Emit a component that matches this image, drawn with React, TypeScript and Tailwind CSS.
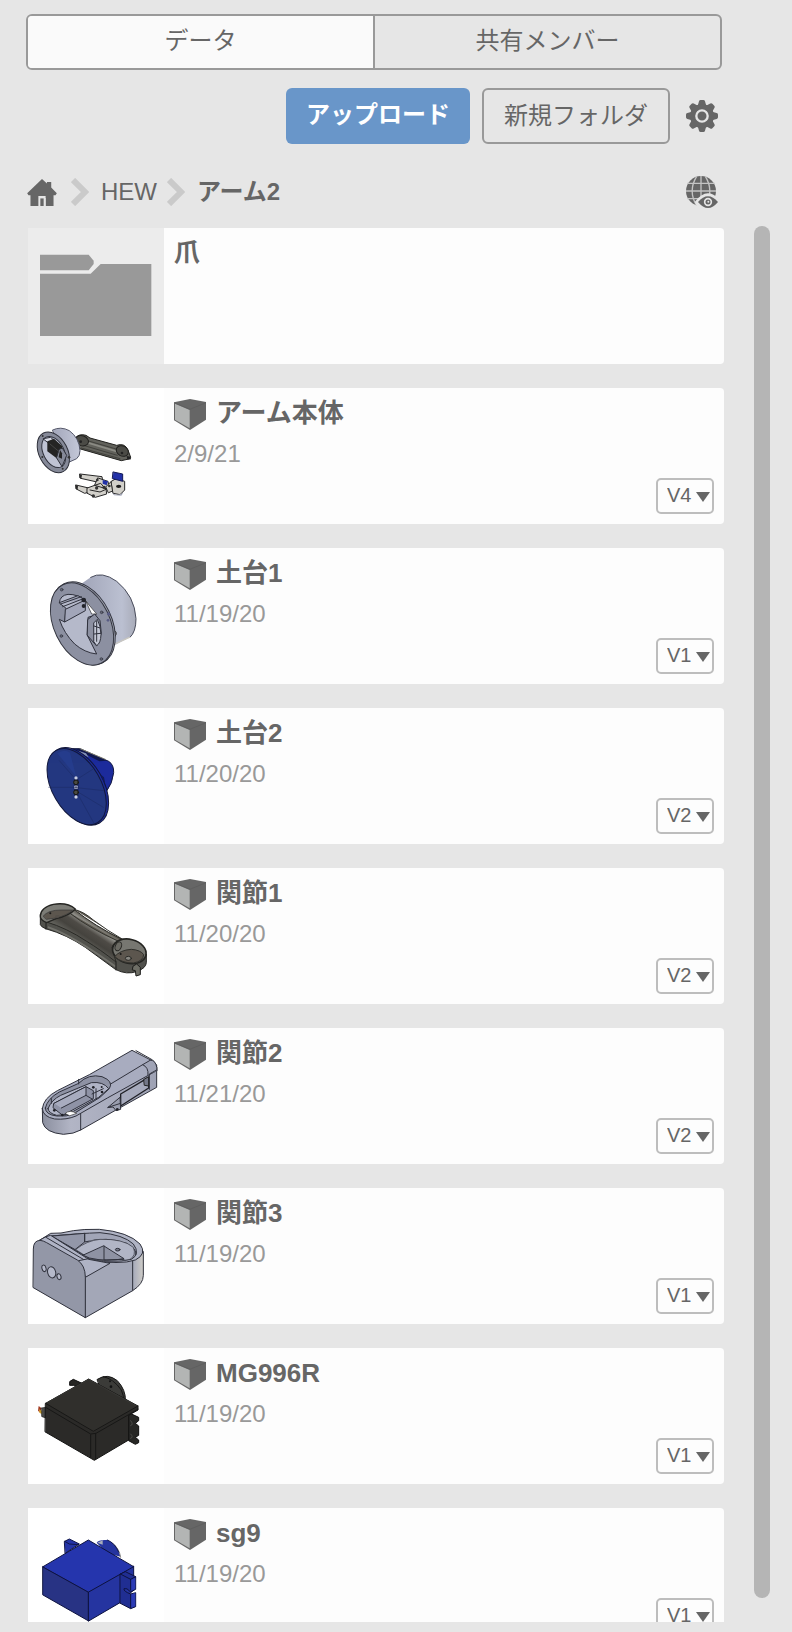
import type { ReactNode } from "react";

const FONT = "font-['Liberation_Sans','Noto_Sans_CJK_JP',sans-serif]";

function HomeIcon() {
  return (
    <svg viewBox="81 534 90 82" className="h-[27px] w-[30px]" fill="#666" aria-hidden="true">
      <path d="M126 534 L141 548 V543 H154 V560 L171 577 L167 583 H161 V616 H137 V592 H120 V616 H91 V583 H85 L81 577 Z" />
      <path d="M115 616 V586 H137 V616 H131 V593 H121 V616 Z" fill="#e6e6e6" />
      <path d="M121 593 H131 V616 H121 Z" />
    </svg>
  );
}

function Chevron() {
  return (
    <svg viewBox="0 0 18 28" className="h-7 w-[18px]" fill="none" stroke="#cacaca" strokeWidth="6" aria-hidden="true">
      <path d="M2 2 L14 14 L2 26" />
    </svg>
  );
}

function GearIcon() {
  return (
    <svg viewBox="-48 -48 96 96" className="size-8" fill="#666" aria-hidden="true">
      {[0, 45, 90, 135, 180, 225, 270, 315].map((a) => (
        <path key={a} transform={`rotate(${a})`} d="M-13 -30 L-9 -44 Q-8 -48 -4 -48 H4 Q8 -48 9 -44 L13 -30 Z" />
      ))}
      <circle r="36" />
      <circle r="17" fill="none" stroke="#e6e6e6" strokeWidth="7" />
    </svg>
  );
}

function GlobeEyeIcon() {
  return (
    <svg viewBox="882 528 96 96" className="size-8" aria-hidden="true">
      <circle cx="927" cy="573" r="45" fill="#666" />
      <g fill="none" stroke="#c4c4c4" strokeWidth="4">
        <path d="M927 528 V618 M886 550 H968 M882 573 H972 M886 596 H968" />
        <path d="M914 529 Q887 573 914 617 M940 529 Q967 573 940 617" />
      </g>
      <path d="M908 606 Q948 554 988 606 V630 H920 Z" fill="#e6e6e6" />
      <path d="M918 606 Q948 572 978 606 Q948 642 918 606 Z" fill="#666" />
      <circle cx="948" cy="606" r="10" fill="#666" stroke="#e6e6e6" strokeWidth="5" />
      <circle cx="949" cy="605" r="3" fill="#e6e6e6" />
    </svg>
  );
}

function CubeIcon() {
  return (
    <svg viewBox="0 0 96 93" className="h-[31px] w-8 shrink-0" aria-hidden="true">
      <path d="M0 10 L48 0 L96 9 V62 L48 93 L0 64 Z" fill="#666" />
      <path d="M3 14 L47 33 V88 L3 62 Z" fill="#b3b5b4" />
      <path d="M0 11 L48 31 L96 11" fill="none" stroke="#5a5a5a" strokeWidth="2" />
    </svg>
  );
}

function Drawing({ viewBox, children }: { viewBox: string; children: ReactNode }) {
  return (
    <svg viewBox={viewBox} className="size-[136px]" strokeLinejoin="round" strokeLinecap="round" aria-hidden="true">
      {children}
    </svg>
  );
}

const folderArt = (
  <Drawing viewBox="84 24 408 408">
    <path d="M120 104 H266 L281 122 V132 L266 151 H120 Z" fill="#999" />
    <path d="M120 161 H272 L302 132 H454 V348 H120 Z" fill="#999" />
  </Drawing>
);

const armArt = (
  <Drawing viewBox="84 504 408 408">
    <defs>
      <linearGradient id="armBarrel" x1="0" x2="1">
        <stop offset="0" stopColor="#a2a6ba" />
        <stop offset="1" stopColor="#c4c8d8" />
      </linearGradient>
    </defs>
    <path d="M228 652 Q238 640 258 646 L270 654 L350 676 Q374 668 384 690 L392 712 L382 718 L364 722 L238 686 Z" fill="#62625c" stroke="#22221f" strokeWidth="3" />
    <path d="M262 662 L352 688 M250 676 L352 706 M244 684 L360 716" stroke="#30302c" strokeWidth="2" fill="none" />
    <path d="M262 668 L350 694" stroke="#8b8b84" strokeWidth="5" />
    <ellipse cx="246" cy="662" rx="20" ry="15" transform="rotate(20 246 662)" fill="#4b4b46" stroke="#20201e" strokeWidth="3" />
    <ellipse cx="367" cy="693" rx="19" ry="15" transform="rotate(30 367 693)" fill="#4b4b46" stroke="#20201e" strokeWidth="3" />
    <circle cx="242" cy="665" r="4" fill="#222" />
    <circle cx="366" cy="699" r="4" fill="#222" />
    <path d="M380 708 L392 710 L393 718 L382 720 Z" fill="#222" />
    <path d="M158 630 Q182 618 208 632 Q238 654 240 692 Q240 708 230 716 L208 726 Z" fill="url(#armBarrel)" stroke="#55586a" strokeWidth="3" />
    <ellipse cx="160" cy="697" rx="43" ry="65" transform="rotate(-27 160 697)" fill="#858998" stroke="#2e303a" strokeWidth="3" />
    <ellipse cx="161" cy="696" rx="31" ry="50" transform="rotate(-27 161 696)" fill="#bfc3d4" stroke="#30323d" strokeWidth="3" />
    <path d="M130 656 L152 652 L176 674 L166 684 Z" fill="#d9dce6" stroke="#30323d" strokeWidth="3" />
    <path d="M142 664 L162 656 L186 678 L188 714 L172 716 L142 694 Z" fill="#242424" />
    <path d="M178 688 L187 684 L200 706 L186 740 L170 714 Z" fill="#858998" stroke="#2e303a" strokeWidth="3" />
    <path d="M180 690 L186 700 V716 L176 712 Z" fill="#242424" />
    <path d="M150 672 L176 694" stroke="#555" strokeWidth="2" />
    <g fill="#333"><circle cx="128" cy="648" r="3" /><circle cx="127" cy="711" r="3" /><circle cx="188" cy="746" r="3" /><circle cx="207" cy="712" r="4" /></g>
    <g fill="#d2d0ca" stroke="#272727" strokeWidth="3">
      <path d="M240 762 L306 770 L308 782 L300 788 L242 775 Z" />
      <path d="M228 795 L266 804 L268 816 L254 820 L229 807 Z" />
      <path d="M294 774 L324 784 L328 804 L300 812 L284 798 Z" />
      <path d="M262 804 L284 796 L318 806 L320 822 L286 832 L262 820 Z" />
      <path d="M318 800 L334 784 L340 812 L326 818 Z" />
      <path d="M334 784 L348 776 L374 784 V810 L360 824 L340 820 Z" />
      <path d="M284 796 L302 790 L316 806 M270 810 L300 816 L318 808" fill="none" />
    </g>
    <path d="M238 762 L246 765 L244 776 L238 773 Z M227 795 L234 797 L233 809 L227 806 Z" fill="#2a2a2a" />
    <path d="M340 756 L368 762 L368 784 L338 776 Z" fill="#2231a8" stroke="#151b55" strokeWidth="3" />
    <path d="M308 780 L324 784 L320 796 L308 791 Z" fill="#2231a8" />
    <path d="M336 819 Q352 830 370 818 L364 827 L342 826 Z" fill="#a5a9ba" />
    <ellipse cx="356" cy="799" rx="8" ry="5" fill="#1e1e1e" />
    <g fill="#333"><circle cx="290" cy="804" r="5" /><circle cx="312" cy="802" r="5" /><circle cx="280" cy="828" r="5" /><circle cx="292" cy="780" r="4" /><circle cx="328" cy="798" r="4" /></g>
  </Drawing>
);

const base1Art = (
  <Drawing viewBox="24 24 408 408">
    <defs>
      <linearGradient id="b1Barrel" x1="0" x2="1">
        <stop offset="0" stopColor="#a0a4b8" />
        <stop offset=".75" stopColor="#bbc0d1" />
        <stop offset="1" stopColor="#a8abb8" />
      </linearGradient>
    </defs>
    <path d="M180 134 L212 112 Q246 92 290 124 Q344 168 348 236 Q348 276 330 292 L284 316 Z" fill="url(#b1Barrel)" />
    <path d="M212 112 Q246 92 290 124 Q344 168 348 236 Q348 276 330 292" fill="none" stroke="#4a4d5c" strokeWidth="3" />
    <path d="M284 312 L328 292" stroke="#c9c7c0" strokeWidth="4" />
    <path d="M276 270 Q292 272 288 284 L280 296" fill="#8f93a3" stroke="#333" strokeWidth="3" />
    <ellipse cx="190" cy="250" rx="85" ry="132" transform="rotate(-26 190 250)" fill="#a3a7b6" stroke="#33353f" strokeWidth="3" />
    <ellipse cx="186" cy="252" rx="84" ry="131" transform="rotate(-26 186 252)" fill="#8c90a1" stroke="#33353f" strokeWidth="3" />
    <path d="M118 188 Q120 166 144 163 Q174 162 198 184 L228 224 L204 232 L202 286 L230 342 Q194 338 164 312 Q132 280 118 238 L134 246 L138 206 Z" fill="#b5b9ca" stroke="#30323d" strokeWidth="3" />
    <path d="M118 188 L174 167 L196 180 L136 208 L134 246 L196 212 V180 M122 192 L184 170 M128 200 L190 176" fill="#a2a6b9" stroke="#30323d" strokeWidth="3" />
    <path d="M198 184 L230 222 L216 222 Z" fill="#fff" stroke="#333" strokeWidth="2" />
    <path d="M204 238 L224 222 L240 242 L244 280 L230 318 L202 286 Z" fill="#8c90a1" stroke="#30323d" strokeWidth="3" />
    <path d="M222 248 L232 238 Q242 256 243 284 Q242 310 230 317 L222 306 Z" fill="#c4c8d6" stroke="#30323d" strokeWidth="3" />
    <path d="M230 244 V304 M222 258 L240 264 M223 282 L242 280" fill="none" stroke="#30323d" strokeWidth="3" />
    <g fill="#23242b"><circle cx="191" cy="180" r="7" /><circle cx="191" cy="198" r="6" /></g>
    <g fill="#666a7a" stroke="#30323d" strokeWidth="2"><circle cx="125" cy="149" r="4" /><circle cx="245" cy="217" r="4" /><circle cx="124" cy="288" r="4" /><circle cx="244" cy="357" r="4" /></g>
    <g fill="#5a5d85"><circle cx="266" cy="222" r="5" /><circle cx="264" cy="241" r="4" /></g>
  </Drawing>
);

const base2Art = (
  <Drawing viewBox="24 24 408 408">
    <path d="M158 146 L180 146 L266 184 Q282 194 281 218 Q278 250 258 276 L236 272 Z" fill="#1c2b9c" stroke="#14193f" strokeWidth="3" />
    <path d="M166 147 L182 147 L262 182 L238 184 Z" fill="#10184e" />
    <path d="M174 152 L198 160 L206 172 L188 164 Z" fill="#7f8db5" />
    <path d="M180 146 L256 178" stroke="#7c7c70" strokeWidth="3" />
    <ellipse cx="175" cy="259" rx="75" ry="127" transform="rotate(-30 175 259)" fill="#1c2c98" stroke="#111638" strokeWidth="3" />
    <ellipse cx="170" cy="260" rx="73" ry="125" transform="rotate(-30 170 260)" fill="#233780" stroke="#12183c" strokeWidth="3" />
    <path d="M112 160 Q132 146 150 158 L168 228 Z" fill="#28439b" opacity=".45" />
    <path d="M166 262 L86 262 M172 280 L222 370 M174 276 L250 322 M174 236 L218 208 M178 264 L252 272 M160 230 L118 182" stroke="#1a2860" strokeWidth="3" opacity=".45" />
    <path d="M168 228 L176 240 L175 286 L168 298 L162 288 L161 240 Z" fill="#17215a" />
    <g fill="#c8cee4"><circle cx="168" cy="234" r="5" /><circle cx="168" cy="262" r="6" /><circle cx="168" cy="291" r="5" /></g>
    <g fill="#4b4b42" stroke="#171713" strokeWidth="3"><circle cx="168" cy="247" r="7" /><circle cx="168" cy="277" r="7" /></g>
    <path d="M163 262 H174 M168 256 V269" stroke="#18204a" strokeWidth="2" />
    <path d="M240 222 L252 232 L256 254 Z" fill="#111a58" />
  </Drawing>
);

const joint1Art = (
  <Drawing viewBox="24 24 408 408">
    <defs>
      <linearGradient id="j1Top" gradientUnits="userSpaceOnUse" x1="170" y1="245" x2="222" y2="165">
        <stop offset="0" stopColor="#6c6c66" />
        <stop offset=".3" stopColor="#45433e" />
        <stop offset=".5" stopColor="#4e4b46" />
        <stop offset=".68" stopColor="#8f8e88" />
        <stop offset=".8" stopColor="#5b574f" />
        <stop offset="1" stopColor="#6a645a" />
      </linearGradient>
    </defs>
    <path d="M61 164 L61 194 Q64 202 80 207 Q140 224 196 262 L286 328 Q320 346 352 334 Q378 324 379 308 V282 L280 240 Z" fill="#51514c" stroke="#262623" strokeWidth="3" />
    <path d="M86 202 Q160 228 284 318" fill="none" stroke="#71716b" strokeWidth="6" />
    <path d="M80 186 Q140 204 200 244 Q240 268 288 306 L276 262 Q284 242 306 238 Q224 198 162 148 L108 176 Z" fill="url(#j1Top)" stroke="#2a2a26" strokeWidth="3" />
    <path d="M162 148 Q190 154 220 180 Q262 212 308 238 M150 160 Q210 206 296 244" fill="#5d584f" stroke="#34342f" strokeWidth="3" />
    <path d="M78 188 V208 M288 306 V330" stroke="#1e1e1c" strokeWidth="3" />
    <path d="M61 168 Q62 142 100 133 Q142 126 166 147 Q150 166 108 176 L80 188 Q60 180 61 168 Z" fill="#7c7c76" stroke="#252522" strokeWidth="4" />
    <path d="M70 168 Q84 150 124 150 Q146 150 158 150 Q142 166 108 174 L80 178 Z" fill="#5c564e" stroke="#333" strokeWidth="2" />
    <ellipse cx="328" cy="274" rx="51" ry="36" transform="rotate(14 328 274)" fill="#777771" stroke="#252522" strokeWidth="5" />
    <path d="M284 290 Q300 270 334 268 Q362 270 371 284 Q370 304 340 309 Q306 310 284 290 Z" fill="#5c564e" stroke="#30302c" strokeWidth="3" />
    <ellipse cx="295" cy="259" rx="9" ry="14" transform="rotate(25 295 259)" fill="#6b6a63" stroke="#292926" strokeWidth="3" />
    <ellipse cx="325" cy="295" rx="9" ry="6" fill="#898882" stroke="#292926" strokeWidth="3" />
    <circle cx="302" cy="282" r="3" fill="#181818" />
    <circle cx="91" cy="160" r="3" fill="#181818" />
    <ellipse cx="112" cy="169" rx="7" ry="4" fill="#55504a" />
    <path d="M340 318 L350 312 L361 322 V344 L348 348 L346 332 L338 330 Z" fill="#6e6e66" stroke="#1e1e1c" strokeWidth="3" />
  </Drawing>
);

const joint2Art = (
  <Drawing viewBox="24 24 408 408">
    <defs>
      <linearGradient id="j2Side" x1="0" x2="1">
        <stop offset="0" stopColor="#8b8f9f" />
        <stop offset=".25" stopColor="#b2b5c5" />
        <stop offset="1" stopColor="#9ea2b4" />
      </linearGradient>
    </defs>
    <path d="M67 266 L68 308 Q76 338 130 343 Q162 342 182 330 L288 270 L410 202 V136 Z" fill="url(#j2Side)" stroke="#30323d" strokeWidth="3" />
    <path d="M67 266 Q70 234 112 212 L208 164 L336 91 L400 124 Q412 132 410 152 L262 234 L168 288 Q140 300 104 297 Q68 290 67 266 Z" fill="#a8acbf" stroke="#30323d" strokeWidth="3" />
    <path d="M384 124 L400 124 Q412 132 411 152 L384 164 Q386 142 368 138 Z" fill="#a0a4b6" />
    <path d="M348 92 L398 120 Q412 132 411 152 M384 164 Q386 142 368 134 L262 198 M368 134 L392 120" fill="none" stroke="#30323d" strokeWidth="3" />
    <path d="M76 264 Q82 236 118 216 L176 190 Q206 160 246 170 Q282 184 268 206 L240 232 L166 278 Q140 292 110 288 Q76 284 76 264 Z" fill="#8e92a4" stroke="#30323d" strokeWidth="3" />
    <path d="M84 266 Q94 240 122 226 L214 188 Q250 184 266 206 L236 232 L160 274 Q136 288 110 286 Q86 280 84 266 Z" fill="#b0b4c6" stroke="#30323d" strokeWidth="3" />
    <path d="M102 250 L198 200 L220 212 V236 L128 286 L100 264 Z" fill="#8f93a6" stroke="#30323d" strokeWidth="3" />
    <path d="M102 250 L198 200 V226 L124 264 M198 226 L218 238" fill="#a8acbf" stroke="#30323d" strokeWidth="3" />
    <path d="M228 206 V236 M216 222 L250 206 M94 250 V236 M176 178 V192" stroke="#30323d" strokeWidth="3" />
    <path d="M136 280 Q148 268 170 280 L150 287 Z" fill="#fff" stroke="#333" strokeWidth="2" />
    <path d="M302 222 L386 172 V204 L302 258 Z" fill="#a6aabc" stroke="#202127" strokeWidth="4" />
    <path d="M372 178 L386 170 V198 L374 196 Z" fill="#737787" stroke="#222" strokeWidth="3" />
    <path d="M264 262 L300 232 L302 268 L288 272 L280 262 Z" fill="#9a9eaf" stroke="#30323d" strokeWidth="3" />
    <path d="M264 262 L302 250 M182 282 V330 M410 150 L388 162 V208" stroke="#30323d" strokeWidth="3" fill="none" />
    <g fill="#202127"><circle cx="103" cy="271" r="4" /><circle cx="127" cy="285" r="4" /><circle cx="220" cy="202" r="4" /><circle cx="246" cy="216" r="4" /><circle cx="245" cy="201" r="3" /><circle cx="292" cy="268" r="4" /></g>
  </Drawing>
);

const joint3Art = (
  <Drawing viewBox="24 24 408 408">
    <defs>
      <linearGradient id="j3End" x1="0" x2="1">
        <stop offset="0" stopColor="#a5a9ba" />
        <stop offset="1" stopColor="#cfcdc8" />
      </linearGradient>
    </defs>
    <path d="M338 240 L370 214 V286 Q370 312 338 332 Z" fill="url(#j3End)" stroke="#30323d" strokeWidth="3" />
    <path d="M196 292 L250 250 L338 238 V332 L196 413 Z" fill="#a3a7b7" stroke="#30323d" strokeWidth="3" />
    <path d="M60 180 L92 160 Q120 162 160 152 Q190 147 238 148 Q326 156 360 192 Q382 222 346 240 Q300 256 206 238 L176 240 Z" fill="#afb3c4" stroke="#30323d" strokeWidth="3" />
    <path d="M94 168 Q180 160 240 158 Q310 164 340 192 Q362 222 334 238 Q280 250 210 236 Z" fill="#a1a5b7" stroke="#30323d" strokeWidth="3" />
    <path d="M96 168 Q150 164 194 160 V186 L166 208 Z" fill="#9397a9" stroke="#30323d" strokeWidth="3" />
    <path d="M194 160 V186 Q260 168 320 190 Q350 206 348 224" fill="none" stroke="#30323d" strokeWidth="3" />
    <path d="M168 208 Q200 182 240 178 Q310 176 340 202 Q350 226 330 238 Q280 250 210 236 Z" fill="#b1b5c6" stroke="#30323d" strokeWidth="2" />
    <path d="M252 198 L312 236 Q260 246 208 234 L190 226 Z" fill="#8e92a3" stroke="#30323d" strokeWidth="3" />
    <path d="M252 198 V240 L312 238" fill="none" stroke="#30323d" strokeWidth="3" />
    <path d="M60 180 L78 170 L92 166 L206 238 L270 250 L196 292 Q188 256 166 242 Z" fill="#afb3c5" stroke="#30323d" strokeWidth="3" />
    <path d="M78 172 L190 238 M206 236 L176 242" fill="none" stroke="#30323d" strokeWidth="3" />
    <path d="M40 206 Q40 182 60 181 Q70 182 80 188 L172 240 Q196 256 196 292 V413 L40 323 Z" fill="#9397a7" stroke="#30323d" strokeWidth="3" />
    <ellipse cx="293" cy="209" rx="7" ry="4" fill="#747888" stroke="#30323d" strokeWidth="3" />
    <g fill="#b5b9ca" stroke="#30323d" strokeWidth="3">
      <ellipse cx="95" cy="277" rx="12" ry="17" transform="rotate(-15 95 277)" />
      <ellipse cx="72" cy="265" rx="6" ry="10" transform="rotate(-15 72 265)" />
      <ellipse cx="117" cy="290" rx="6" ry="9" transform="rotate(-15 117 290)" />
    </g>
  </Drawing>
);

const mgArt = (
  <Drawing viewBox="24 24 408 408">
    <path d="M56 198 L64 204 L62 220 L54 212 Z" fill="#a13a24" />
    <path d="M58 208 L66 212 L66 222 L58 218 Z" fill="#e0b030" />
    <path d="M64 204 L78 202 V234 L66 230 Z" fill="#4a4a48" stroke="#191918" strokeWidth="2" />
    <path d="M150 124 L160 118 L186 130 L176 142 L160 136 L150 136 Z" fill="#252523" stroke="#111" strokeWidth="3" />
    <path d="M232 118 Q262 98 292 122 Q318 150 316 182 L240 140 Z" fill="#3b3b38" stroke="#151514" strokeWidth="3" />
    <path d="M250 110 Q280 116 304 150 Q312 168 310 178" fill="none" stroke="#181817" strokeWidth="3" />
    <g fill="#111"><circle cx="270" cy="124" r="3" /><circle cx="273" cy="140" r="4" /><circle cx="272" cy="155" r="3" /></g>
    <path d="M326 218 L356 232 V242 L346 250 L356 258 V286 L346 292 L356 300 V308 L346 313 L326 302 Z" fill="#272725" stroke="#10100f" strokeWidth="3" />
    <path d="M332 242 Q342 254 332 257 M332 282 Q342 292 332 295" fill="none" stroke="#5c5c57" strokeWidth="2" />
    <path d="M77 190 L206 117 L354 198 V210 L326 226 V300 L223 361 L76 276 Z" fill="#2b2a28" stroke="#121211" strokeWidth="3" />
    <path d="M77 190 L206 117 L354 198 L220 277 Z" fill="#302f2c" />
    <path d="M77 190 L220 274 L354 198 M77 202 L212 282 L228 280 L354 208 M212 284 V352 M227 282 V358" fill="none" stroke="#171716" strokeWidth="3" />
    <path d="M84 186 L206 118 L346 196" fill="none" stroke="#3d3c39" strokeWidth="2" />
  </Drawing>
);

const sgArt = (
  <Drawing viewBox="24 54 408 408">
    <path d="M134 154 L148 147 L178 162 L150 180 L136 190 Z" fill="#2434a8" stroke="#0f154a" strokeWidth="3" />
    <path d="M134 154 L148 162 L176 164" fill="none" stroke="#0f154a" strokeWidth="3" />
    <path d="M230 158 Q236 148 262 150 Q292 160 302 200 L260 190 Z" fill="#25349f" />
    <path d="M232 158 L248 151 V164 Z" fill="#a9adba" />
    <path d="M280 162 Q298 176 302 202" fill="none" stroke="#8f8e86" strokeWidth="3" />
    <path d="M262 150 Q284 158 296 186" fill="none" stroke="#11174e" strokeWidth="3" />
    <path d="M69 230 L206 304 V393 L69 315 Z" fill="#283384" stroke="#0d123f" strokeWidth="3" />
    <path d="M206 304 L341 228 V300 L300 338 L206 393 Z" fill="#2534a0" stroke="#0d123f" strokeWidth="3" />
    <path d="M69 230 L205 150 L341 230 L206 306 Z" fill="#2535ad" stroke="#0d123f" strokeWidth="3" />
    <path d="M301 252 L316 245 L347 260 V298 L332 306 Q320 292 312 296 Q310 304 332 312 L347 308 V350 L332 356 L301 340 Z" fill="#202e92" stroke="#0d123f" strokeWidth="3" />
    <path d="M301 252 L332 268 L347 260 M332 268 V300 M332 312 V354" fill="none" stroke="#0d123f" strokeWidth="3" />
    <path d="M334 269 L346 263 V296 L334 302 Z M334 313 L346 309 V348 L334 353 Z" fill="#2b3bb5" />
  </Drawing>
);

interface Item {
  name: string;
  date: string;
  version: string;
  art: ReactNode;
}

const items: Item[] = [
  { name: "アーム本体", date: "2/9/21", version: "V4", art: armArt },
  { name: "土台1", date: "11/19/20", version: "V1", art: base1Art },
  { name: "土台2", date: "11/20/20", version: "V2", art: base2Art },
  { name: "関節1", date: "11/20/20", version: "V2", art: joint1Art },
  { name: "関節2", date: "11/21/20", version: "V2", art: joint2Art },
  { name: "関節3", date: "11/19/20", version: "V1", art: joint3Art },
  { name: "MG996R", date: "11/19/20", version: "V1", art: mgArt },
  { name: "sg9", date: "11/19/20", version: "V1", art: sgArt },
];

function VersionSelect({ item }: { item: Item }) {
  return (
    <div className="relative m-2.5 self-end">
      <select
        aria-label={item.name}
        defaultValue={item.version}
        className="block h-9 w-[58px] appearance-none rounded-[5px] border-2 border-[#bdbdbd] bg-[#fdfdfd] pb-0.5 pl-[9px] text-xl leading-7 text-[#666]"
      >
        <option>{item.version}</option>
      </select>
      <svg viewBox="0 0 14 10" className="pointer-events-none absolute top-3.5 right-1 h-2.5 w-3.5" fill="#666" aria-hidden="true">
        <path d="M0 0 H14 L7 10 Z" />
      </svg>
    </div>
  );
}

function ItemCard({ item }: { item: Item }) {
  return (
    <li className="flex shrink-0 overflow-hidden rounded-r-[4px] bg-[#fdfdfd]">
      <div className="shrink-0 bg-white">{item.art}</div>
      <div className="flex-1 pl-2.5">
        <div className="flex items-start gap-2.5 pt-[11px]">
          <CubeIcon />
          <h2 className="text-[26px] leading-7 font-bold">{item.name}</h2>
        </div>
        <p className="mt-2 text-2xl leading-8 text-[#999]">{item.date}</p>
      </div>
      <VersionSelect item={item} />
    </li>
  );
}

export default function App() {
  return (
    <div className={`flex h-screen flex-col overflow-hidden bg-[#e6e6e6] text-[#666] ${FONT}`}>
      <div className="mr-[70px] ml-[26px] flex flex-col">
        <div role="tablist" className="mt-3.5 flex h-14 overflow-hidden rounded-md border-2 border-[#999] text-2xl">
          <button role="tab" aria-selected="true" className="flex-1 border-r-2 border-[#999] bg-[#fafafa] pb-0.5">
            データ
          </button>
          <button role="tab" aria-selected="false" className="flex-1 pb-0.5">
            共有メンバー
          </button>
        </div>

        <div className="mt-[18px] flex items-center justify-end gap-3 pr-1 text-2xl">
          <button className="h-14 rounded-md bg-[#6996c9] px-5 pb-0.5 font-bold text-white">アップロード</button>
          <button className="h-14 rounded-md border-2 border-[#999] px-5">新規フォルダ</button>
          <button aria-label="設定" className="ml-1">
            <GearIcon />
          </button>
        </div>

        <nav className="mt-8 flex h-8 items-center pr-1 text-2xl">
          <a href="#home" aria-label="ホーム" className="mr-3.5 ml-px">
            <HomeIcon />
          </a>
          <Chevron />
          <a href="#hew" className="mr-2.5 ml-3">HEW</a>
          <Chevron />
          <a href="#arm2" className="ml-3 font-bold">アーム2</a>
          <button aria-label="公開設定" className="ml-auto">
            <GlobeEyeIcon />
          </button>
        </nav>
      </div>

      <div className="mt-[18px] mr-[22px] mb-2.5 ml-7 flex min-h-0 flex-1 gap-[30px]">
        <ul className="mt-0.5 flex min-h-0 flex-1 flex-col gap-6 overflow-hidden">
          <li className="flex shrink-0 overflow-hidden rounded-r-[4px] bg-[#fdfdfd]">
            <div className="shrink-0 bg-[#ececec]">{folderArt}</div>
            <h2 className="pt-[11px] pl-2.5 text-[26px] leading-7 font-bold">爪</h2>
          </li>
          {items.map((item) => (
            <ItemCard key={item.name} item={item} />
          ))}
        </ul>
        <div className="mb-6 w-4 rounded-full bg-[#b5b5b5]" />
      </div>
    </div>
  );
}
